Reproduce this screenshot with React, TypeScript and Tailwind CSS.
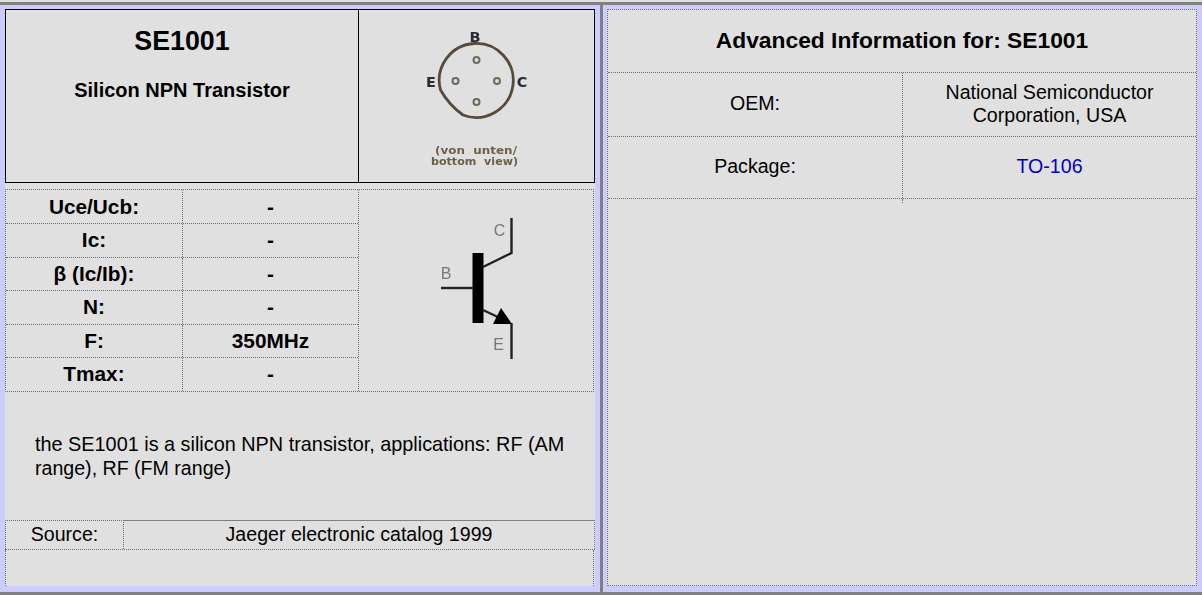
const specs = [
  { label: "Uce/Ucb:", value: "-", height: "h-[33px]", pad: "" },
  { label: "Ic:", value: "-", height: "h-[34px]", pad: "pb-[1px]" },
  { label: "β (Ic/Ib):", value: "-", height: "h-[33px]", pad: "" },
  { label: "N:", value: "-", height: "h-[34px]", pad: "pb-[1px]" },
  { label: "F:", value: "350MHz", height: "h-[33px]", pad: "" },
  { label: "Tmax:", value: "-", height: "h-[34px]", pad: "pb-[1px]" },
];

function PackageDrawing() {
  return (
    <svg viewBox="359 10 235 172" className="block w-[235px] h-[172px] blur-[0.4px]">
      <path
        d="M440.5 90 A37 37 0 1 1 463 115 Q449 105 440.5 90 Z"
        fill="none"
        stroke="#564a3a"
        strokeWidth="2.8"
        strokeLinejoin="round"
      />
      {[
        [476.5, 60],
        [455.5, 81],
        [497, 81],
        [476.5, 102],
      ].map(([cx, cy]) => (
        <circle key={`${cx}-${cy}`} cx={cx} cy={cy} r="3" fill="none" stroke="#6f685c" strokeWidth="2" />
      ))}
      <g fontFamily="'DejaVu Sans', sans-serif" fontWeight="700" fontSize="14.5" fill="#2a2a35" textAnchor="middle">
        <text x="475" y="42">B</text>
        <text x="431" y="87">E</text>
        <text x="522" y="87">C</text>
      </g>
      <g fontFamily="'DejaVu Sans', sans-serif" fontWeight="700" fontSize="11" fill="#6e5e48">
        <text x="435" y="153.5" textLength="82" lengthAdjust="spacingAndGlyphs">(von{"\u00a0\u00a0"}unten/</text>
        <text x="431" y="165" textLength="87" lengthAdjust="spacingAndGlyphs">bottom{"\u00a0\u00a0"}view)</text>
      </g>
    </svg>
  );
}

function TransistorSymbol() {
  return (
    <svg viewBox="359 190 234 200" className="block w-[234px] h-[200px] blur-[0.3px]">
      <rect x="472.5" y="253" width="11" height="70" fill="#000" />
      <g fill="none" stroke="#222" strokeWidth="2.4">
        <path d="M441 288 H473" />
        <path d="M483 267 L511.5 253 V218" />
        <path d="M483 310 L500 318" />
        <path d="M511.5 323 V359" />
      </g>
      <path d="M501 308 L493 324 H512 Z" fill="#000" />
      <g fontFamily="'Liberation Sans', sans-serif" fontSize="16" fill="#777" textAnchor="middle">
        <text x="499.5" y="236">C</text>
        <text x="446" y="279">B</text>
        <text x="498.5" y="350">E</text>
      </g>
    </svg>
  );
}

export default function App() {
  return (
    <div className="w-[1202px] h-[595px] overflow-hidden bg-[#e0e0e0] pt-[2px] text-[19.6px] leading-[24px] text-black font-['Liberation_Sans',Arial,sans-serif]">
      <div className="flex h-[593px] border-y-[3px] border-[#808080] bg-[#ccccff]">
        <div className="w-[600px] pl-[5px] pr-[5px] pt-[4px] pb-[6px]">
          <div className="h-[577px] bg-[#e0e0e0] flex flex-col">
            <div className="flex h-[174px] border border-black">
              <div className="w-[353px] border-r border-black flex flex-col items-center">
                <div className="mt-[15px] font-bold text-[26.8px] leading-[32px]">SE1001</div>
                <div className="mt-[21px] font-bold text-[20px]">Silicon NPN Transistor</div>
              </div>
              <PackageDrawing />
            </div>

            <div className="mt-[6px] w-[589px] flex border border-dotted border-[#707070]">
              <div className="w-[353px] border-r border-dotted border-[#707070]">
                {specs.map((row, i) => (
                  <div
                    key={row.label}
                    className={`flex font-bold text-[20.8px] ${row.height} ${
                      i > 0 ? "border-t border-dotted border-[#707070]" : ""
                    }`}
                  >
                    <div
                      className={`w-[177px] flex items-center justify-center border-r border-dotted border-[#707070] ${row.pad}`}
                    >
                      {row.label}
                    </div>
                    <div className={`flex-1 flex items-center justify-center ${row.pad}`}>{row.value}</div>
                  </div>
                ))}
              </div>
              <TransistorSymbol />
            </div>

            <p className="mt-[40px] pl-[30px] pr-[25px] h-[88px] text-[19.85px]">
              the SE1001 is a silicon NPN transistor, applications: RF (AM{" "}
              <span className="text-[19.6px]">range), RF (FM range)</span>
            </p>

            <div className="flex h-[30px] w-[590px] border-b border-dotted border-[#707070]">
              <div className="w-[119px] pb-[2px] flex items-center justify-center border-t border-l border-r border-dotted border-[#707070]">
                Source:
              </div>
              <div className="flex-1 pb-[2px] flex items-center justify-center border-t border-r border-[#808080] [border-right-style:dotted]">
                Jaeger electronic catalog 1999
              </div>
            </div>
            <div className="flex-1 w-[589px] border-l border-r border-dotted border-[#707070]" />
          </div>
        </div>

        <div className="w-[3px] bg-[#808080]" />

        <div className="flex-1 pl-[4px] pr-[5px] pt-[4px] pb-[6px]">
          <div className="h-[577px] bg-[#e0e0e0] border border-dotted border-[#707070] flex flex-col">
            <div className="h-[63px] pb-[3px] flex items-center justify-center font-bold text-[22.8px] border-b border-dotted border-[#707070]">
              Advanced Information for: SE1001
            </div>
            <div className="h-[64px] flex border-b border-dotted border-[#707070]">
              <div className="w-[295px] pb-[4px] flex items-center justify-center border-r border-dotted border-[#707070]">
                OEM:
              </div>
              <div className="flex-1 flex items-center justify-center text-center px-[30px] pb-[1px] leading-[23px]">
                National Semiconductor Corporation, USA
              </div>
            </div>
            <div className="h-[62px] flex border-b border-dotted border-[#707070]">
              <div className="w-[295px] pb-[3px] flex items-center justify-center border-r border-dotted border-[#707070]">
                Package:
              </div>
              <div className="flex-1 pb-[3px] flex items-center justify-center text-[#0000c0]">TO-106</div>
            </div>
            <div className="w-[295px] h-[4px] border-r border-dotted border-[#707070]" />
          </div>
        </div>
      </div>
    </div>
  );
}
